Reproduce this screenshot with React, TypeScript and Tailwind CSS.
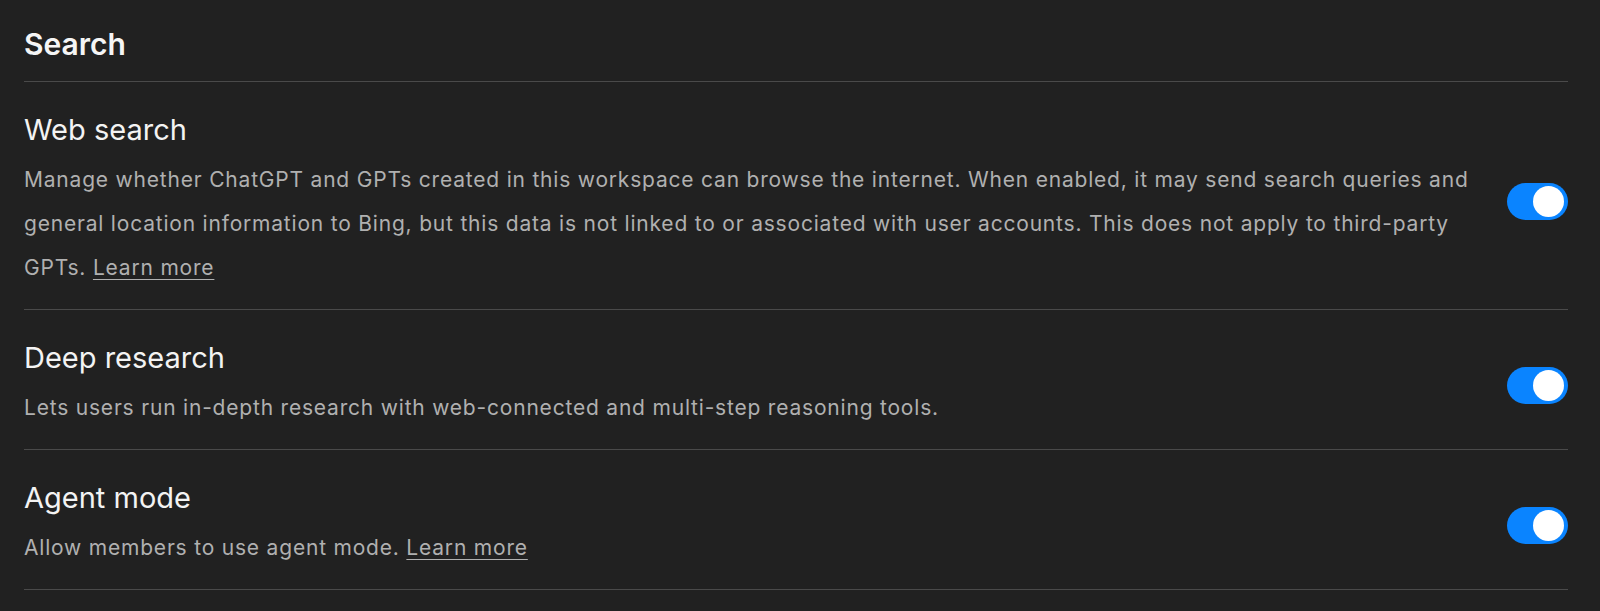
import type { ReactNode } from 'react'

function Toggle() {
  return (
    <div className="flex h-[37px] w-[61px] shrink-0 items-center justify-end rounded-full bg-[#0a84ff] pr-[4px]">
      <div className="h-[31px] w-[31px] rounded-full bg-white" />
    </div>
  )
}

function LearnMore() {
  return <a className="cursor-pointer underline decoration-1 underline-offset-[4px]">Learn more</a>
}

function Row({ title, children }: { title: string; children: ReactNode }) {
  return (
    <div className="flex items-center gap-6 border-b border-[#4a4a4a] pt-[30px] pb-[19px]">
      <div className="flex-1">
        <h3 className="text-[29px] leading-[36px] text-[#f3f3f3]">{title}</h3>
        <p className="mt-[10px] text-[21px] leading-[44px] tracking-[0.8px] text-[#b0b0b0]">{children}</p>
      </div>
      <Toggle />
    </div>
  )
}

export default function App() {
  return (
    <div className="min-h-screen bg-[#212121] pl-6 pr-8 font-['Inter',sans-serif] antialiased">
      <h2 className="border-b border-[#4a4a4a] pt-[26px] pb-[19px] text-[30px] font-semibold leading-[36px] text-[#f5f5f5]">
        Search
      </h2>
      <Row title="Web search">
        Manage whether ChatGPT and GPTs created in this workspace can browse the internet. When enabled, it may send
        search queries and general location information to Bing, but this data is not linked to or associated with user
        accounts. This does not apply to third-party GPTs. <LearnMore />
      </Row>
      <Row title="Deep research">Lets users run in-depth research with web-connected and multi-step reasoning tools.</Row>
      <Row title="Agent mode">
        Allow members to use agent mode. <LearnMore />
      </Row>
    </div>
  )
}
